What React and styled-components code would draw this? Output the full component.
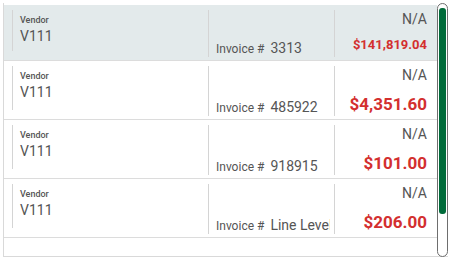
import React from "react";
import styled, { createGlobalStyle } from "styled-components";

const Global = createGlobalStyle`
  html, body { margin: 0; padding: 0; background: #fff; }
  body { font-family: Roboto, "Noto Sans", sans-serif; }
`;

const Page = styled.div`
  padding: 3px 4px 0 3px;
  width: 452px;
  height: 260px;
  box-sizing: border-box;
`;

const Frame = styled.div`
  position: relative;
  height: 254px;
`;

const List = styled.div`
  height: 254px;
  box-sizing: border-box;
  border-left: 1px solid #d9d9d9;
  border-bottom: 1px solid #d9d9d9;
  overflow: hidden;
  padding-top: 2px;
  padding-right: 11px;
`;

const ScrollTrack = styled.div`
  position: absolute;
  top: 0;
  right: 0;
  width: 11px;
  height: 254px;
  box-sizing: border-box;
  border: 1px solid #6e6e6e;
  border-radius: 6px;
  background: #fff;
  padding: 4px 1px;
`;

const ScrollThumb = styled.div`
  width: 100%;
  height: 206px;
  background: #006b3a;
  border-radius: 3px;
`;

const Row = styled.div`
  display: grid;
  grid-template-columns: 196px 126px 1fr;
  height: ${(p) => (p.$active ? "56px" : "59px")};
  box-sizing: border-box;
  padding: 5px 10px 3px 8px;
  background: ${(p) => (p.$active ? "#e3eaeb" : "#fff")};
  border-bottom: 1px solid #dcdcdc;
`;

const Cell = styled.div`
  border-left: 1px solid #d4d4d4;
  padding-left: 7px;
  min-width: 0;
  display: flex;
  flex-direction: column;
`;

const VendorCell = styled(Cell)`
  margin-bottom: 6px;
`;

const Label = styled.div`
  font-size: 9px;
  font-weight: 500;
  color: #555;
  margin-top: 4px;
  line-height: 12px;
`;

const Value = styled.div`
  font-size: 14px;
  color: #555;
  line-height: 18px;
  margin-top: 1px;
`;

const InvoiceCell = styled(Cell)`
  justify-content: flex-end;
  padding-bottom: 1px;
  padding-right: 4px;
`;

const InvoiceLine = styled.div`
  white-space: nowrap;
  overflow: hidden;
  color: #555;
  display: flex;
  align-items: baseline;
`;

const InvLabel = styled.span`
  font-size: 12px;
  margin-right: 6px;
  flex-shrink: 0;
`;

const InvValue = styled.span`
  font-size: 14px;
`;

const AmountCell = styled(Cell)`
  align-items: flex-end;
  justify-content: space-between;
  padding-bottom: 2px;
`;

const NA = styled.div`
  font-size: 14px;
  color: #555;
  line-height: 18px;
`;

const Amount = styled.div`
  font-weight: 700;
  color: #d32f2f;
  font-size: ${(p) => (p.$small ? "13px" : "17px")};
  line-height: 20px;
`;

const rows = [
  { inv: "3313", amt: "$141,819.04", small: true, active: true },
  { inv: "485922", amt: "$4,351.60" },
  { inv: "918915", amt: "$101.00" },
  { inv: "Line Level", amt: "$206.00" },
];

export default function App() {
  return (
    <Page>
      <Global />
      <Frame>
        <List>
          {rows.map((r, i) => (
            <Row key={i} $active={r.active}>
              <VendorCell>
                <Label>Vendor</Label>
                <Value>V111</Value>
              </VendorCell>
              <InvoiceCell>
                <InvoiceLine>
                  <InvLabel>Invoice #</InvLabel>
                  <InvValue>{r.inv}</InvValue>
                </InvoiceLine>
              </InvoiceCell>
              <AmountCell>
                <NA>N/A</NA>
                <Amount $small={r.small}>{r.amt}</Amount>
              </AmountCell>
            </Row>
          ))}
        </List>
        <ScrollTrack>
          <ScrollThumb />
        </ScrollTrack>
      </Frame>
    </Page>
  );
}
